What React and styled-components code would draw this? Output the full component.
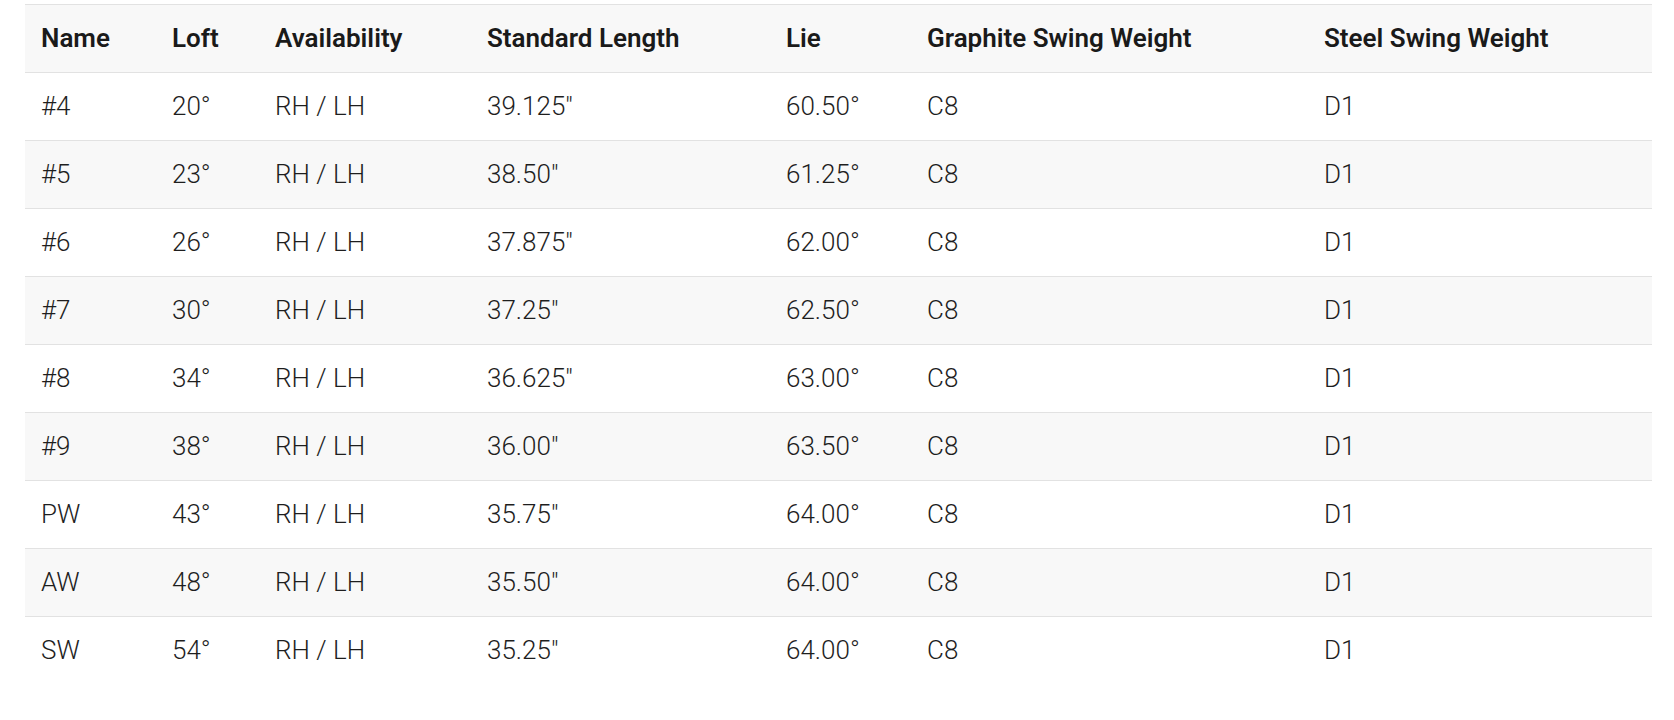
import React from "react";
import styled, { createGlobalStyle } from "styled-components";

const GlobalStyle = createGlobalStyle`
  html, body {
    margin: 0;
    padding: 0;
    background: #fff;
  }
  body {
    font-family: Roboto, "Liberation Sans", Arial, sans-serif;
    color: #212121;
  }
`;

const Page = styled.div`
  padding: 4px 22px 0 25px;
`;

const Table = styled.table`
  width: 100%;
  border-collapse: collapse;
  table-layout: fixed;
  font-size: 26px;
  line-height: 36px;
  border-top: 1px solid #e2e2e2;
`;

const HeadCell = styled.th`
  text-align: left;
  font-weight: 600;
  color: #1a1a1a;
  padding: 14.5px 16px 16.5px;
  background: #f8f8f8;
  white-space: nowrap;
`;

const Row = styled.tr`
  background: ${(p) => (p.$striped ? "#f8f8f8" : "#fff")};
  border-top: 1px solid #e2e2e2;
`;

const Cell = styled.td`
  padding: 14.5px 16px 16.5px;
  font-weight: 300;
  color: #1e1e1e;
  white-space: nowrap;
`;

const COLUMNS = [
  { label: "Name", width: 131 },
  { label: "Loft", width: 103 },
  { label: "Availability", width: 212 },
  { label: "Standard Length", width: 299 },
  { label: "Lie", width: 141 },
  { label: "Graphite Swing Weight", width: 397 },
  { label: "Steel Swing Weight", width: 344 },
];

const ROWS = [
  ["#4", "20°", "RH / LH", '39.125"', "60.50°", "C8", "D1"],
  ["#5", "23°", "RH / LH", '38.50"', "61.25°", "C8", "D1"],
  ["#6", "26°", "RH / LH", '37.875"', "62.00°", "C8", "D1"],
  ["#7", "30°", "RH / LH", '37.25"', "62.50°", "C8", "D1"],
  ["#8", "34°", "RH / LH", '36.625"', "63.00°", "C8", "D1"],
  ["#9", "38°", "RH / LH", '36.00"', "63.50°", "C8", "D1"],
  ["PW", "43°", "RH / LH", '35.75"', "64.00°", "C8", "D1"],
  ["AW", "48°", "RH / LH", '35.50"', "64.00°", "C8", "D1"],
  ["SW", "54°", "RH / LH", '35.25"', "64.00°", "C8", "D1"],
];

export default function App() {
  return (
    <>
      <GlobalStyle />
      <Page>
        <Table>
          <colgroup>
            {COLUMNS.map((c) => (
              <col key={c.label} style={{ width: c.width }} />
            ))}
          </colgroup>
          <thead>
            <tr>
              {COLUMNS.map((c) => (
                <HeadCell key={c.label}>{c.label}</HeadCell>
              ))}
            </tr>
          </thead>
          <tbody>
            {ROWS.map((r, i) => (
              <Row key={r[0]} $striped={i % 2 === 1}>
                {r.map((v, j) => (
                  <Cell key={j}>{v}</Cell>
                ))}
              </Row>
            ))}
          </tbody>
        </Table>
      </Page>
    </>
  );
}
